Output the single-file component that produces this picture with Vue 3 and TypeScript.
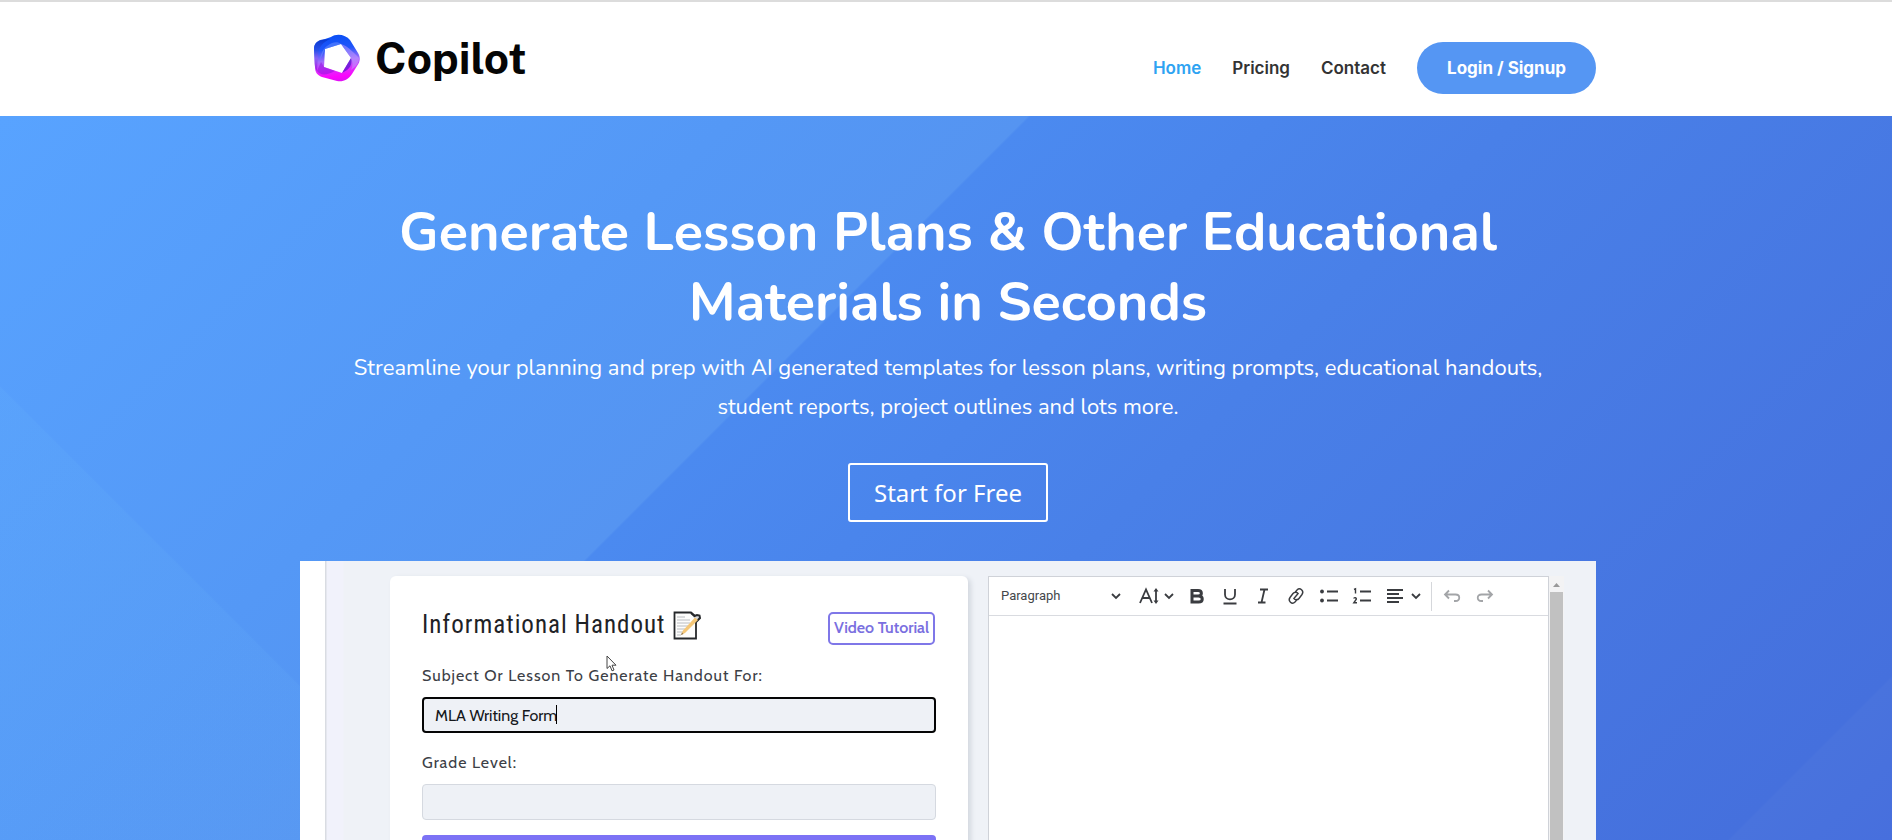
<script setup lang="ts">
import { ref } from 'vue'

const navLinks = ['Home', 'Pricing', 'Contact']
const subject = ref('MLA Writing Form')
const grade = ref('')
const block = ref('Paragraph')
</script>

<template>
  <div class="page">
    <header class="header">
      <div class="container header-row">
        <a class="brand" href="#">
          <svg class="brand-mark" viewBox="0 0 48 48" aria-hidden="true">
            <defs>
              <linearGradient id="ring" x1="0.4" y1="0" x2="0.5" y2="1">
                <stop offset="0" stop-color="#0a50f5" />
                <stop offset="0.3" stop-color="#1f55fa" />
                <stop offset="0.55" stop-color="#a06bfb" />
                <stop offset="0.75" stop-color="#dd2cfb" />
                <stop offset="0.9" stop-color="#fb05fd" />
                <stop offset="1" stop-color="#e010f5" />
              </linearGradient>
              <linearGradient id="fold" x1="0" y1="0" x2="0" y2="1">
                <stop offset="0" stop-color="#0534cc" />
                <stop offset="0.35" stop-color="#2a4fe4" />
                <stop offset="0.6" stop-color="#8b62f5" />
                <stop offset="1" stop-color="#a30fe0" />
              </linearGradient>
            </defs>
            <path fill="url(#ring)" fill-rule="evenodd" d="M18 3 C24 -1 33 1 37 6 L45 19 C48 24 47 28 44 32 L39 40 C35 46 30 48 24 47 L9 43 C4 41 2 38 2 33 L1 15 C1 10 4 7 9 6 Z M28 10 L12 15 L11 33 L29 39 L38 24 Z" />
            <path fill="url(#fold)" opacity="0.85" d="M1 15 C1 9 5 6 10 5.500 L17 5 C10 8 6 13 5 20 L4 37 C2 35 1.500 31 1.500 26 Z" />
            <path fill="#5a14d0" opacity="0.75" d="M38 24 L29 39 L34 36 C38 33 39 29 38 24 Z" />
            <path fill="#6d94ff" opacity="0.5" d="M28 10 L12 15 L7 26 C8 17 12 12 19 9 C22 8 26 8 28 10 Z" />
            <path fill="#c79cff" opacity="0.5" d="M38 24 L28 10 C35 12 41 19 46 24 C46 29 43 33 38 36 C40 32 40 28 38 24 Z" />
            <path fill="#8a12dd" opacity="0.5" d="M4 37 C8 42 14 41 22 37 L11 33 L8 28 Z" />
          </svg>
          <span>Copilot</span>
        </a>
        <nav class="nav" aria-label="Main">
          <a v-for="(link, i) in navLinks" :key="link" href="#" :class="{ active: i === 0 }">{{ link }}</a>
          <a class="login" href="#">Login / Signup</a>
        </nav>
      </div>
    </header>

    <main class="hero">
      <div class="container hero-inner">
        <div class="intro">
          <h1>Generate Lesson Plans &amp; Other Educational<br />Materials in Seconds</h1>
          <p>Streamline your planning and prep with AI generated templates for lesson plans, writing prompts, educational handouts,<br />student reports, project outlines and lots more.</p>
          <a class="start" href="#">Start for Free</a>
        </div>

        <section class="demo" aria-label="Product preview">
          <form class="card" @submit.prevent>
            <div class="card-head">
              <h2>Informational Handout</h2>
              <svg class="memo" viewBox="0 0 28 29" aria-hidden="true">
                <path d="M1.500 1.500 H18 L23 6 V27.500 H1.500 Z" fill="#fdfdfc" stroke="#26282b" stroke-width="1.800" />
                <path d="M4 6 H12 M4 9 H17 M4 12 H17 M4 15 H15 M4 18 H12 M4 21 H10 M4 24 H8" stroke="#b9bcc0" fill="none" />
                <path d="M18 2 L21.500 5 L24 4 L26.500 4.500 L27 7 L23 11" fill="#d8dadd" stroke="#26282b" stroke-width="2" />
                <path d="M8 24 L10 19.500 L22 6.500 L25 9 L12 22 Z" fill="#f5c777" />
                <path d="M8 24 L9 21.500 L10.500 23 Z" fill="#8d7650" />
              </svg>
              <button class="tutorial" type="button">Video Tutorial</button>
            </div>
            <label for="subject">Subject Or Lesson To Generate Handout For:</label>
            <div class="field">
              <input id="subject" v-model="subject" class="focused" type="text" />
              <span class="caret" aria-hidden="true"></span>
            </div>
            <label class="next" for="grade">Grade Level:</label>
            <div class="field">
              <input id="grade" v-model="grade" type="text" />
            </div>
            <button class="generate" type="submit" aria-label="Generate"></button>
            <svg class="pointer" viewBox="0 0 11 17" aria-hidden="true">
              <path d="M1 1 V13.500 L4 10.800 L6 15.800 L8 15 L6 10.200 H10 Z" fill="#fff" stroke="#444" />
            </svg>
          </form>

          <div class="editor">
            <div class="toolbar" role="toolbar" aria-label="Formatting">
              <div class="block-pick">
                <select v-model="block" aria-label="Block style"><option>Paragraph</option></select>
                <svg class="chev" viewBox="0 0 12 20"><path d="M2 8 L6 12 L10 8" /></svg>
              </div>
              <button type="button" class="with-chev" aria-label="Font size">
                <svg class="icon" viewBox="0 0 20 20"><path d="M1 17 L7 3.500 L13 17 M3.500 12 H10.500 M17 4 V16" /><path class="solid" d="M17 2 L19.500 5.500 H14.500 Z M17 18 L14.500 14.500 H19.500 Z" /></svg>
                <svg class="chev" viewBox="0 0 12 20"><path d="M2 8 L6 12 L10 8" /></svg>
              </button>
              <button type="button" aria-label="Bold"><svg class="icon bold" viewBox="0 0 20 20"><path d="M5 4.500 H11 C15.500 4.500 15.500 10 11 10 H5 Z M5 10 H11.500 C16.500 10 16.500 16 11.500 16 H5 Z" /></svg></button>
              <button type="button" aria-label="Underline"><svg class="icon" viewBox="0 0 20 20"><path d="M5 3 V8.500 C5 15 15 15 15 8.500 V3 M3.500 17.500 H16.500" /></svg></button>
              <button type="button" aria-label="Italic"><svg class="icon" viewBox="0 0 20 20"><path d="M7 3.500 H15 M5 16.500 H12.500 M11.500 3.500 L8.500 16.500" /></svg></button>
              <button type="button" aria-label="Link"><svg class="icon thin" viewBox="0 0 20 20"><path d="M8.500 7 L11 4 C14 1 18.500 5 16 8.500 L13 12.500 C11.500 14.500 8.500 14 7.500 12 M11.500 13 L9 16 C6 19 1.500 15 4 11.500 L7 7.500 C8.500 5.500 11.500 6 12.500 8 M7.500 13 L12.500 7" /></svg></button>
              <button type="button" aria-label="Bulleted list"><svg class="icon" viewBox="0 0 20 20"><path d="M8 5.500 H19 M8 14.500 H19" /><circle class="solid" cx="3" cy="5.500" r="1.900" /><circle class="solid" cx="3" cy="14.500" r="1.900" /></svg></button>
              <button type="button" aria-label="Numbered list"><svg class="icon" viewBox="0 0 20 20"><path d="M8 5.500 H19 M8 14.500 H19" /><path class="thin" d="M2 3.500 L3.500 2.800 V7.500 M1.800 12.500 C2 11.300 4.700 11.500 4.300 13.200 L1.800 16.800 H5" /></svg></button>
              <button type="button" class="with-chev align" aria-label="Alignment">
                <svg class="icon" viewBox="0 0 20 20"><path d="M2 4 H18 M2 8 H14 M2 12 H18 M2 16 H14" /></svg>
                <svg class="chev" viewBox="0 0 12 20"><path d="M2 8 L6 12 L10 8" /></svg>
              </button>
              <span class="divider"></span>
              <button type="button" class="off" aria-label="Undo"><svg class="icon" viewBox="0 0 20 20"><path d="M7 4.500 L3 8.500 L7 12.500 M3 8.500 H13.500 C18.500 8.500 18.500 15 13.500 15 H12" /></svg></button>
              <button type="button" class="off" aria-label="Redo"><svg class="icon" viewBox="0 0 20 20"><path d="M13 4.500 L17 8.500 L13 12.500 M17 8.500 H6.500 C1.500 8.500 1.500 15 6.500 15 H8" /></svg></button>
            </div>
          </div>
          <div class="scrollbar" aria-hidden="true">
            <svg viewBox="0 0 13 16"><path d="M3 11 L6.500 7 L10 11 Z" fill="#999" /></svg>
            <span></span>
          </div>
        </section>
      </div>
    </main>
  </div>
</template>

<style>
body {
  margin: 0;
  overflow: hidden;
}
</style>

<style scoped>
* {
  box-sizing: border-box;
}
.page {
  display: flex;
  flex-direction: column;
  height: 100vh;
  overflow: hidden;
  font-family: Inter, "Liberation Sans", sans-serif;
}
a {
  text-decoration: none;
}
.header {
  flex: none;
  padding-left: 4px;
  background: #fff;
  border-top: 2px solid #dcdcdc;
}
.container {
  width: 80%;
  max-width: 1296px;
  margin: 0 auto;
}
.header-row {
  display: flex;
  justify-content: space-between;
  height: 114px;
}
.brand {
  display: flex;
  align-items: center;
  gap: 14px;
  height: 112px;
  padding-left: 13px;
  color: #050505;
  font-family: "Public Sans", Inter, sans-serif;
  font-size: 44px;
  font-weight: 700;
}
.brand-mark {
  width: 48px;
  height: 48px;
}
.nav {
  display: flex;
  align-items: center;
  align-self: center;
  gap: 31px;
  padding-top: 18px;
  font-size: 17px;
  font-weight: 600;
}
.nav a {
  color: #333;
}
.nav .active {
  color: #2ea3f2;
}
.nav .login {
  padding: 0 30px;
  border-radius: 26px;
  background: #5596f3;
  color: #fff;
  font-weight: 700;
  line-height: 52px;
}
.hero {
  flex: 1;
  padding-left: 4px;
  overflow: hidden;
  background:
    linear-gradient(45deg, rgb(130 210 255 / 7%) 17.3%, transparent 17.4%),
    linear-gradient(135deg, #58a3ff 0%, #5498f6 28%, #5594f1 39.3%, #4b8af0 39.4%, #4980e8 58%, #4570dd 93.7%, #4973dd 93.8%, #476fdd 100%);
}
.hero-inner {
  display: flex;
  flex-direction: column;
  height: 100%;
}
.intro {
  padding: 81px 0 39px;
  color: #fff;
  text-align: center;
}
h1 {
  margin: 0;
  font: 700 54px/70px Nunito, Lato, sans-serif;
}
p {
  margin: 12px 0 36px;
  font: 400 22px/39px Nunito, "Open Sans", sans-serif;
  white-space: nowrap;
}
.start {
  display: inline-block;
  padding: 0 24px;
  border: 2px solid #fff;
  border-radius: 3px;
  color: #fff;
  font: 400 24px/55px "Noto Sans", sans-serif;
}
.demo {
  display: grid;
  grid-template-columns: 578fr 20px 561fr 15px;
  flex: 1;
  padding: 15px 32px 0 90px;
  background: linear-gradient(90deg, #fff 25px, #d9dce2 25px 26px, #f1f2fb 27px 43px, #eff2f7 44px);
}
.card {
  position: relative;
  padding: 32px 32px 0;
  border-radius: 6px 6px 0 0;
  background: #fff;
  box-shadow: 3px 2px 5px #d3d8df;
  color: #3c4046;
  font-family: Cabin, Lato, sans-serif;
}
.card-head {
  display: flex;
  align-items: center;
  gap: 7px;
  height: 34px;
  margin-bottom: 22px;
}
h2 {
  margin: 0;
  color: #1e2226;
  font: 400 25px/32px "Roboto Condensed", Roboto, sans-serif;
  letter-spacing: 1px;
}
.memo {
  width: 28px;
  height: 29px;
}
.tutorial {
  height: 33px;
  margin: 6px 1px 0 auto;
  padding: 0 4px;
  border: 2px solid #7f77e8;
  border-radius: 5px;
  background: #fff;
  color: #7a6fe0;
  font: 600 16px/28px Cabin, Lato, sans-serif;
}
label {
  display: block;
  font-size: 16px;
  letter-spacing: 1px;
  line-height: 24px;
}
.next {
  margin-top: 18px;
}
.field {
  position: relative;
  margin-top: 9px;
}
input {
  display: block;
  width: 100%;
  height: 36px;
  padding: 0 13px;
  border: 1px solid #d5d9e0;
  border-radius: 4px;
  background: #eef1f6;
  color: #15181c;
  font: 400 16px/32px Cabin, Lato, sans-serif;
}
.focused {
  padding: 0 11px;
  border: 2px solid #050505;
}
.caret {
  position: absolute;
  top: 8px;
  left: 134px;
  width: 1px;
  height: 19px;
  background: #000;
}
.generate {
  display: block;
  width: 100%;
  height: 40px;
  margin-top: 15px;
  border: 0;
  border-radius: 4px;
  background: #7c72f5;
}
.pointer {
  position: absolute;
  top: 79px;
  left: 216px;
  width: 11px;
  height: 17px;
}
.editor {
  grid-column: 3;
  min-width: 0;
  border: 1px solid #cfd2d8;
  border-bottom: 0;
  background: #fff;
}
.toolbar {
  display: flex;
  align-items: center;
  height: 39px;
  padding-left: 12px;
  border-bottom: 1px solid #d9dbe0;
}
.toolbar button {
  display: flex;
  align-items: center;
  justify-content: center;
  flex: none;
  width: 33px;
  height: 32px;
  padding: 0;
  border: 0;
  background: none;
}
.toolbar .with-chev {
  gap: 4px;
  width: 46px;
}
.toolbar .align {
  gap: 5px;
  width: 50px;
}
.block-pick {
  display: flex;
  align-items: center;
  width: 121px;
  margin-right: 12px;
}
select {
  flex: 1;
  padding: 0;
  border: 0;
  appearance: none;
  background: none;
  color: #44474b;
  font: 400 13px/20px Roboto, "Liberation Sans", sans-serif;
}
.icon,
.chev {
  fill: none;
  stroke: #3a3c40;
  stroke-width: 1.800;
}
.icon {
  width: 20px;
  height: 20px;
}
.chev {
  width: 12px;
  height: 20px;
}
.bold {
  stroke-width: 3;
}
.thin {
  stroke-width: 1.400;
}
.solid {
  fill: #3a3c40;
  stroke: none;
}
.off .icon {
  stroke: #a3a5a8;
}
.divider {
  width: 1px;
  height: 29px;
  margin: 0 3px;
  background: #d5d7db;
}
.scrollbar {
  display: flex;
  flex-direction: column;
  padding: 0 1px;
  background: #f3f3f4;
}
.scrollbar svg {
  width: 13px;
  height: 16px;
}
.scrollbar span {
  flex: 1;
  background: #c1c1c1;
}
</style>
